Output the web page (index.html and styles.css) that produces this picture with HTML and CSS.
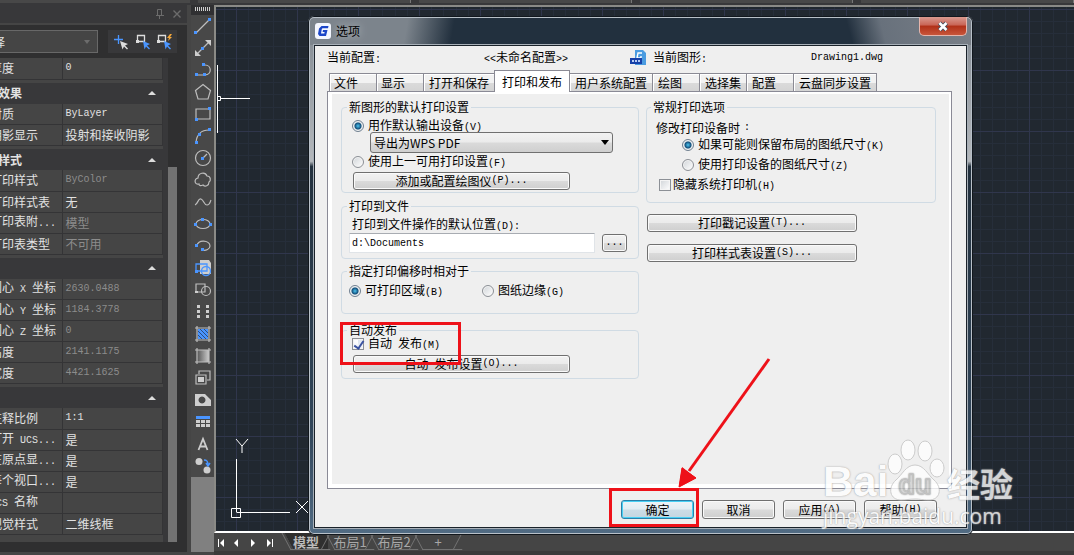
FILE: index.html
```html
<!DOCTYPE html>
<html lang="zh-CN">
<head>
<meta charset="utf-8">
<title>选项</title>
<link rel="stylesheet" href="styles.css">
</head>
<body>
<div class="app">
  <header class="topbar"><i></i><i></i><i></i><i></i></header>

  <aside class="props">
    <div class="props-title">
      <svg width="8" height="10" viewBox="0 0 8 10" fill="none" stroke="#6c6c6c"><path d="M1.5 6.500V.5h4v6M5.500.5v6M0 6.500h8M3.500 7v3"/></svg>
      <svg width="8" height="8" viewBox="0 0 8 8" stroke="#6c6c6c" stroke-width="1.400"><path d="M.5.5l7 7M7.500.5l-7 7"/></svg>
    </div>
    <div class="props-pick">
      <button class="combo"><span>择</span><svg width="6" height="4" viewBox="0 0 6 4"><path d="M0 0h6L3 4z" fill="#6c6c6c"/></svg></button>
      <div class="pickers">
        <svg width="16" height="16" viewBox="0 0 16 16"><path d="M5.500 1v9M1 5.500h9" stroke="#4a95ff" stroke-width="1.300"/><path d="M7 7l8 3-3 1.500 3 3-1 1-3-3-1.500 3z" fill="#ddd"/></svg>
        <svg width="16" height="16" viewBox="0 0 16 16"><path d="M2.500 1.500h7v6h-7z" fill="none" stroke="#ddd" stroke-width="1.300"/><path d="M1 6h3v3H1z" fill="#ddd"/><path d="M8 7l7 3-3 1.500 3 3-1 1-3-3-1.500 3z" fill="#4a95ff"/></svg>
        <svg width="16" height="16" viewBox="0 0 16 16"><path d="M2.500 1.500h7v6h-7z" fill="none" stroke="#ddd" stroke-width="1.300"/><path d="M1 6h3v3H1z" fill="#ddd"/><path d="M14 0l-3 4h2l-1 3 4-4h-2l2-3z" fill="#f5a83a"/><path d="M8 7l7 3-3 1.500 3 3-1 1-3-3-1.500 3z" fill="#4a95ff"/></svg>
      </div>
    </div>
    <div class="props-body">
      <div class="props-list">
        <table class="prop"><tr><th>厚度</th><td class="lat">0</td></tr></table>
        <h3>效果<b></b></h3>
        <table class="prop"><tr><th>材质</th><td class="lat">ByLayer</td></tr><tr><th>阴影显示</th><td>投射和接收阴影</td></tr></table>
        <h3>样式<b></b></h3>
        <table class="prop dim"><tr><th>打印样式</th><td class="lat">ByColor</td></tr><tr><th>打印样式表</th><td class="on">无</td></tr><tr><th>打印表附<span class="lat">...</span></th><td>模型</td></tr><tr><th>打印表类型</th><td>不可用</td></tr></table>
        <h3><b></b></h3>
        <table class="prop dim"><tr><th>圆心<span class="lat"> X </span>坐标</th><td class="lat">2630.0488</td></tr><tr><th>圆心<span class="lat"> Y </span>坐标</th><td class="lat">1184.3778</td></tr><tr><th>圆心<span class="lat"> Z </span>坐标</th><td class="lat">0</td></tr><tr><th>高度</th><td class="lat">2141.1175</td></tr><tr><th>宽度</th><td class="lat">4421.1625</td></tr></table>
        <h3><b></b></h3>
        <table class="prop"><tr><th>注释比例</th><td class="lat">1:1</td></tr><tr><th>打开<span class="lat"> UCS...</span></th><td>是</td></tr><tr><th>在原点显<span class="lat">...</span></th><td>是</td></tr><tr><th>每个视口<span class="lat">...</span></th><td>是</td></tr><tr><th><span class="lat">UCS </span>名称</th><td></td></tr><tr><th>视觉样式</th><td>二维线框</td></tr></table>
      </div>
      <div class="scroll"><i></i></div>
    </div>
  </aside>

  <nav class="tools">
    <div class="grip"><i></i></div>
    <button aria-label="直线"><svg viewBox="0 0 18 18"><path d="M2 16L16 2" class="s"/><path d="M0 14h3v3H0zM14 1h3v3h-3z" class="b"/></svg></button>
    <button aria-label="构造线"><svg viewBox="0 0 18 18"><path d="M2 16L16 2" class="s"/><path d="M11 1h6v6zM1 11v6h6z" class="w"/><path d="M7 8h3v3H7z" class="b"/></svg></button>
    <button aria-label="多段线"><svg viewBox="0 0 18 18"><path d="M2 14h9c7 0 7-10 0-10h-2" class="s"/><path d="M1 12h3v3H1zM9 12h3v3H9zM8 2h3v3H8z" class="b"/></svg></button>
    <button aria-label="多边形"><svg viewBox="0 0 18 18"><path d="M9 1.500l7.500 6L14 16H4L1.500 7.500z" class="s"/></svg></button>
    <button aria-label="矩形"><svg viewBox="0 0 18 18"><path d="M2 4h14v10H2z" class="s"/><path d="M1 13h3v3H1zM14 2h3v3h-3z" class="b"/></svg></button>
    <button aria-label="圆弧"><svg viewBox="0 0 18 18"><path d="M2 15C3 7 7 3 15 3" class="s"/><path d="M1 14h3v3H1zM4 6h3v3H4zM14 1h3v3h-3z" class="b"/></svg></button>
    <button aria-label="圆"><svg viewBox="0 0 18 18"><circle cx="9" cy="9" r="7.500" class="s"/><path d="M9 9l4-4" class="s"/><path d="M7 8h3v3H7z" class="b"/></svg></button>
    <button aria-label="修订云线"><svg viewBox="0 0 18 18"><path d="M5 13c-5 1-5-5-1-6 0-5 7-7 9-2 4 0 4 5 2 6 0 4-4 5-6 3-2 1-4 1-4-1z" class="s"/></svg></button>
    <button aria-label="样条曲线"><svg viewBox="0 0 18 18"><path d="M1 12c3-1 3-7 6-6s3 6 6 6 3-3 4-5" class="s"/></svg></button>
    <button aria-label="椭圆"><svg viewBox="0 0 18 18"><ellipse cx="9" cy="9" rx="7" ry="4.500" class="s"/><path d="M0 8h3v3H0zM15 8h3v3h-3zM7 3h3v3H7z" class="b"/></svg></button>
    <button aria-label="椭圆弧"><svg viewBox="0 0 18 18"><path d="M3 9c0-7 13-6 13 0 0 3-4 5-8 4" class="s"/><path d="M1 7h3v3H1zM7 11h3v3H7z" class="b"/></svg></button>
    <button aria-label="插入块"><svg viewBox="0 0 18 18"><path d="M6 1h9l2 3v11H6z" class="w"/><path d="M2 5h11v7H2z" fill="none" stroke="#4a95ff" stroke-width="1.300"/><circle cx="12" cy="12" r="4.500" fill="none" stroke="#4a95ff" stroke-width="1.300"/><path d="M1 11h3v3H1z" class="b"/></svg></button>
    <button aria-label="创建块"><svg viewBox="0 0 18 18"><path d="M2 3h9v8H2z" class="s"/><circle cx="12" cy="10" r="4.500" class="s"/><path d="M1 10h3v2H1z" class="w"/></svg></button>
    <button aria-label="点"><svg viewBox="0 0 18 18"><path d="M3 2h3v3H3zM12 2h3v3h-3zM3 7h3v3H3zM12 7h3v3h-3zM3 12h3v3H3zM12 12h3v3h-3z" class="w"/></svg></button>
    <button aria-label="图案填充"><svg viewBox="0 0 18 18"><path d="M1 3h16M1 15h16M3 1v16M15 1v16" class="s"/><path d="M4 4h10v10H4z" class="b"/><path d="M4 10l4 4M4 6l8 8M6 4l8 8M10 4l4 4" stroke="#2c4c7c"/></svg></button>
    <button aria-label="渐变色"><svg viewBox="0 0 18 18"><defs><linearGradient id="gr"><stop stop-color="#555"/><stop offset="1" stop-color="#ccc"/></linearGradient></defs><path d="M3 3h12v12H3z" fill="url(#gr)"/><path d="M1 3h16M1 15h16M3 1v16M15 1v16" class="s"/></svg></button>
    <button aria-label="面域"><svg viewBox="0 0 18 18"><path d="M5 5V2h11v9h-3" class="s"/><path d="M2 6h10v9H2z" class="s"/><path d="M4 8h6v5H4z" class="w"/></svg></button>
    <button aria-label="区域覆盖"><svg viewBox="0 0 18 18"><path fill-rule="evenodd" d="M1 3h10l6 6v6H1zM8 5.500a3.500 3.500 0 1 0 .01 0z" class="w"/></svg></button>
    <button aria-label="表格"><svg viewBox="0 0 18 18"><path d="M2 3h14v3H2z" class="b"/><path d="M2 7h4v3H2zM7 7h4v3H7zM12 7h4v3h-4zM2 11h4v3H2zM7 11h4v3H7zM12 11h4v3h-4z" class="w"/></svg></button>
    <button aria-label="多行文字"><svg viewBox="0 0 18 18"><path d="M4.500 15L9 4l4.500 11M6 11.500h6" fill="none" stroke="#ccc" stroke-width="1.800"/></svg></button>
    <button aria-label="添加选定对象"><svg viewBox="0 0 18 18"><circle cx="5" cy="4.500" r="3.500" class="w"/><circle cx="13" cy="13" r="3.500" class="w"/><path d="M10 3c3 0 4 1 4 5M12 6l2 3 2-3" fill="none" stroke="#4a95ff" stroke-width="1.500"/></svg></button>
    <div class="tools-rest"></div>
  </nav>

  <main class="canvas">
    <svg class="grid" width="100%" height="100%">
      <defs><pattern id="g" x="20" y="63" width="61" height="61" patternUnits="userSpaceOnUse">
        <path d="M12.500 0v61M24.500 0v61M37.500 0v61M49.500 0v61M0 12.500h61M0 24.500h61M0 37.500h61M0 49.500h61" stroke="#262e3a"/>
        <path d="M.5 0v61M0 .5h61" stroke="#30364c"/></pattern></defs>
      <rect width="100%" height="100%" fill="#212830"/><rect width="100%" height="100%" fill="url(#g)"/>
      <g fill="none" stroke="#fff"><path d="M1.500 58v68M5 91.500h29"/><path d="M1.500 89.500h3v4h-3z"/></g>
    </svg>
    <svg class="ucs" width="84" height="86" viewBox="0 0 84 86" fill="none" stroke="#fff"><path d="M20.500 24v53M20.500 77.500H74M15.500 73.500h9v9h-9zM20 4l6 7 6-7M26 11v7M80 66l12 12M92 66L80 78"/></svg>
  </main>

  <footer class="layouts">
    <svg width="58" height="8" viewBox="0 0 58 8" fill="#fff"><path d="M2 0h1v8H2zM8 0v8L4 4zM22 0v8l-4-4zM35 0v8l4-4zM51 0v8l4-4zM56 0h1v8h-1z"/></svg>
    <div class="layout-tabs"><button class="cur">模型</button><button>布局1</button><button>布局2</button><button>+</button></div>
  </footer>
</div>

<section class="dialog" role="dialog" aria-label="选项">
  <div class="titlebar">
    <svg width="16" height="16" viewBox="0 0 16 16"><rect width="16" height="16" rx="3" fill="#f4f7ff"/><path d="M13.500 3H6.500L4 5.500 3 11l1.500 2h6.500l1.500-6H8l-.4 2h2l-.3 1.500H6l.8-4.500.7-.8H13z" fill="#1c46c8"/></svg>
    <span>选项</span>
    <button class="close" aria-label="关闭"><svg width="12" height="11" viewBox="0 0 12 11"><path d="M2.500 2l7 7M9.500 2l-7 7" stroke="#444c5c" stroke-width="4.500"/><path d="M2.500 2l7 7M9.500 2l-7 7" stroke="#fff" stroke-width="2.600"/></svg></button>
  </div>
  <div class="client">
    <div class="heading">
      <span class="h1">当前配置<span class="lat">:</span></span>
      <span class="h2"><span class="lat">&lt;&lt;</span>未命名配置<span class="lat">&gt;&gt;</span></span>
      <svg width="16" height="16" viewBox="0 0 16 16"><path d="M5 0h8l3 3v12H5z" fill="#4a9be0"/><path d="M12 3H8L7 8h4V6" fill="none" stroke="#fff" stroke-width="1.400"/><path d="M0 8h12v6H0z" fill="#1740a8"/><path d="M2 11h8" stroke="#b8ccf4" stroke-width="2" stroke-dasharray="2 1"/></svg>
      <span class="h3">当前图形<span class="lat">:</span></span>
      <span class="lat">Drawing1.dwg</span>
    </div>
    <div class="tabs" role="tablist">
      <button role="tab">文件</button><button role="tab">显示</button><button role="tab">打开和保存</button><button role="tab" aria-selected="true">打印和发布</button><button role="tab">用户系统配置</button><button role="tab">绘图</button><button role="tab">选择集</button><button role="tab">配置</button><button role="tab">云盘同步设置</button>
    </div>
    <div class="page"><div class="cols">
      <div class="col">
        <fieldset class="f1"><legend>新图形的默认打印设置</legend>
          <label class="opt"><input type="radio" name="dev" checked><span>用作默认输出设备<span class="lat">(V)</span></span></label>
          <div class="drop"><select aria-label="输出设备"><option>导出为WPS PDF</option></select><svg width="8" height="5" viewBox="0 0 8 5"><path d="M0 0h8L4 5z"/></svg></div>
          <label class="opt gap3"><input type="radio" name="dev"><span>使用上一可用打印设置<span class="lat">(F)</span></span></label>
          <button class="btn wide">添加或配置绘图仪<span class="lat">(P)...</span></button>
        </fieldset>
        <fieldset class="f2"><legend>打印到文件</legend>
          <label class="opt" for="path"><span>打印到文件操作的默认位置<span class="lat">(D):</span></span></label>
          <div class="path"><input id="path" class="lat" type="text" value="d:\Documents"><button class="btn lat">...</button></div>
        </fieldset>
        <fieldset class="f3"><legend>指定打印偏移时相对于</legend>
          <div class="pair"><label class="opt"><input type="radio" name="off" checked><span>可打印区域<span class="lat">(B)</span></span></label><label class="opt"><input type="radio" name="off"><span>图纸边缘<span class="lat">(G)</span></span></label></div>
        </fieldset>
        <fieldset class="f4"><legend>自动发布</legend>
          <label class="opt"><input type="checkbox" checked><span>自动<span class="lat"> </span>发布<span class="lat">(M)</span></span></label>
          <button class="btn wide">自动<span class="lat">&nbsp;</span>发布设置<span class="lat">(O)...</span></button>
          <div class="mark mark-auto"></div>
        </fieldset>
      </div>
      <div class="col">
        <fieldset class="f5"><legend>常规打印选项</legend>
          <div class="opt">修改打印设备时<span class="lat">:</span></div>
          <label class="opt sub"><input type="radio" name="paper" checked><span>如果可能则保留布局的图纸尺寸<span class="lat">(K)</span></span></label>
          <label class="opt sub"><input type="radio" name="paper"><span>使用打印设备的图纸尺寸<span class="lat">(Z)</span></span></label>
          <label class="opt hide"><input type="checkbox"><span>隐藏系统打印机<span class="lat">(H)</span></span></label>
        </fieldset>
        <button class="btn side">打印戳记设置<span class="lat">(T)...</span></button>
        <button class="btn side">打印样式表设置<span class="lat">(S)...</span></button>
      </div>
    </div></div>
    <div class="actions">
      <div class="okwrap"><button class="btn ok">确定</button><div class="mark mark-ok"></div>
        <svg class="arrow" width="96" height="132" viewBox="0 0 96 132"><path d="M92 2L12 114" stroke="#ee1119" stroke-width="3"/><path d="M2 130l3-20 14 11z" fill="#ee1119"/><path d="M2 130l3-19 14 10z" stroke="#ee1119" fill="#ee1119"/></svg>
      </div>
      <button class="btn">取消</button><button class="btn">应用<span class="lat">(A)</span></button><button class="btn">帮助<span class="lat">(H)</span></button>
    </div>
  </div>
</section>

<div class="watermark">
  <div class="brand"><span class="bai">Bai</span>
    <svg width="58" height="62" viewBox="0 0 58 62" fill="#fff" stroke="#c4c4c4"><ellipse cx="8" cy="24" rx="7" ry="10"/><ellipse cx="21" cy="10" rx="7" ry="10"/><ellipse cx="38" cy="11" rx="7" ry="10"/><ellipse cx="50" cy="28" rx="7" ry="9"/><path d="M28 25c9 0 13 10 19 15 9 8 6 20-5 20-7 0-8-1-14-1s-8 1-14 1C3 60 0 48 9 40c6-5 10-15 19-15z"/><text x="28" y="54" text-anchor="middle" class="du">du</text></svg>
    <span class="jy">经验</span></div>
  <div class="url">jingyan.baidu.com</div>
</div>
</body>
</html>
```
FILE: styles.css
```css
* { box-sizing: border-box; }
body {
  margin: 0;
  height: 100vh;
  overflow: hidden;
  position: relative;
  background: #454545;
  font: 12px/14px "Noto Sans CJK SC", sans-serif;
  color: #000;
}
button, input, select { font: inherit; color: inherit; margin: 0; padding: 0; }
button { border: 0; background: none; white-space: nowrap; }
.lat { font-family: "Liberation Mono", monospace; font-size: 10px; white-space: pre; }

/* application shell */
.app {
  height: 100vh;
  display: grid;
  grid-template: 5px 1fr 22px / 191px 23px 1fr;
}
.topbar { grid-column: 1 / -1; display: flex; gap: 8px; padding-left: 98px; background: #38383a; }
.topbar::before { content: ""; width: 190px; height: 3px; margin-left: -98px; background: #484848; }
.topbar i { flex: 1; height: 3px; background: #484848; border-right: 1px solid #777; }
.props { grid-row: 2 / 4; display: flex; flex-direction: column; overflow: hidden; background: #2f2f30; border-right: 4px solid #454545; border-bottom: 3px solid #454545; color: #e2e2e2; }
.props-title { height: 20px; background: #38383a; border-bottom: 2px solid #454545; display: flex; justify-content: flex-end; align-items: center; gap: 9px; padding-right: 6px; }
.props-pick { display: flex; justify-content: space-between; margin: 5px 10px 5px 0; height: 23px; }
.combo { width: 98px; border: 1px solid #686868; border-left: 0; background: #454545; display: flex; justify-content: space-between; align-items: center; padding-right: 7px; overflow: hidden; }
.combo span { margin-left: -7px; }
.pickers { width: 69px; background: #38383a; display: flex; align-items: center; justify-content: space-evenly; }
.props-body { flex: 1; display: flex; margin: 0 10px 10px 0; background: #38383a; }
.props-list { width: 163px; background: #454545; overflow: hidden; }
.prop { width: 163px; border-collapse: collapse; table-layout: fixed; margin-bottom: 3px; border-bottom: 0; }
.prop tr { height: 21px; }
.prop th, .prop td { height: 21px; padding: 0; border: 0 solid #343436; border-bottom-width: 1px; font-weight: 400; text-align: left; white-space: pre; overflow: hidden; }
.prop th { width: 62px; text-indent: -10px; }
.prop td { border-left-width: 1px; border-right-width: 1px; padding-left: 3px; }
.prop td.lat, .prop td { color: #e2e2e2; }
.dim td, .dim td.lat { color: #8c8c8c; }
.dim td.on { color: #e2e2e2; }
.props h3 { margin: 0; height: 21px; background: #38383a; font-size: 12px; line-height: 20px; font-weight: 700; text-indent: -2px; display: flex; justify-content: space-between; align-items: center; padding-right: 7px; }
.props h3 b { margin-left: auto; border: 4px solid transparent; border-top: 0; border-bottom-color: #ddd; }
.scroll { margin-left: auto; width: 9px; background: #2f2f30; padding-top: 109px; display: flex; }
.scroll i { width: 9px; background: #727272; }

.tools { grid-row: 2 / 4; display: flex; flex-direction: column; background: #484848; border-bottom: 3px solid #454545; }
.grip { height: 10px; background: #303032; padding: 2px 4px; }
.grip i { display: block; height: 4px; background: repeating-linear-gradient(90deg, #ccc 0 1px, transparent 1px 2px); }
.tools button { height: 22px; display: flex; align-items: center; justify-content: center; }
.tools svg { width: 18px; height: 18px; }
.tools .s { fill: none; stroke: #bdbdbd; stroke-width: 1.2; }
.tools .w { fill: #cecece; }
.tools .b { fill: #4a95ff; }
.tools-rest { flex: 1; background: #808080; }

.canvas { position: relative; overflow: hidden; border: 2px solid #8a8a86; border-width: 2px 0 2px 2px; border-bottom-color: #fff; }
.grid { display: block; }
.ucs { position: absolute; left: 0; bottom: 10px; overflow: visible; }
.layouts { grid-column: 3; display: flex; align-items: flex-start; background: #454545; border-bottom: 4px solid #3b3b3b; }
.layouts > svg { margin: 6px 0 0 2px; }
.layout-tabs { display: flex; margin-left: 10px; }
.layout-tabs button { position: relative; height: 17px; width: 44px; color: #a8a8a8; font-size: 13px; line-height: 16px; }
.layout-tabs button::before { content: ""; position: absolute; inset: 0 2px; border: 1px solid #737373; border-top: 0; border-right-width: 0; transform: skewX(28deg); }
.layout-tabs button::after { content: ""; position: absolute; inset: 0 2px; border-right: 1px solid #737373; transform: skewX(-28deg); }
.layout-tabs .cur { color: #bbb; font-weight: 700; }
.layout-tabs .cur { background: linear-gradient(62deg, transparent 18%, #2f2f2f 19%); }

/* options dialog */
.dialog {
  position: absolute;
  inset: 16px 101px 20px 308px;
  display: flex;
  flex-direction: column;
  padding: 0 6px 7px;
  border-radius: 6px;
  border: 0;
  background:
    linear-gradient(100deg, #7c848c 0, #7c848c 15%, transparent 22%) top / 100% 29px no-repeat,
    linear-gradient(75deg, transparent 81%, #68717c 86%, #7a8088 100%) top / 100% 29px no-repeat,
    linear-gradient(#22303e, #22303e) top / 100% 29px no-repeat,
    linear-gradient(#808890 0, #b4b8bc 28%, #24323f 29%, #31465a 80%, #526c84 100%);
  box-shadow: inset 0 0 0 1px #11171d, inset 0 0 0 2px #b8c0c8;
}
.titlebar { flex: none; height: 29px; display: flex; align-items: center; gap: 5px; padding-left: 1px; }
.titlebar span { text-shadow: 0 0 8px #c8ccd0; font-size: 12px; }
.close { align-self: flex-start; margin: 1px 0 0 auto; width: 48px; height: 19px; display: flex; align-items: center; justify-content: center; border: 1px solid #e5b5ac; border-top: 0; border-radius: 0 0 5px 5px; background: linear-gradient(#d99a90, #c96455 45%, #b03018 50%, #c8553a); }
.client { flex: 1; display: flex; flex-direction: column; min-height: 0; padding: 0 14px 0 12px; background: #efefef; border: 1px solid #1a222a; box-shadow: 0 0 0 1px #a8b0b8; }
.heading { height: 24px; display: flex; align-items: center; }
.h1 { width: 157px; }
.h2 { width: 146px; }
.h3 { width: 158px; margin-left: 7px; }
.tabs { height: 21px; display: flex; align-items: flex-end; padding-left: 2px; }
.tabs button { height: 18px; min-width: 48px; padding: 0 4px; text-align: left; border: 1px solid #8a8a94; border-width: 1px 1px 0; box-shadow: inset 1px 1px #fff; margin-right: -1px; background: linear-gradient(#f2f2f2 50%, #dadada 55%, #d4d4d4); line-height: 17px; }
.tabs button:nth-child(n+3) { padding: 0 5px; }
.tabs [aria-selected] { height: 22px; margin-bottom: -1px; padding: 0 7px; background: #fff; line-height: 20px; position: relative; }
.tabs button[aria-selected] { padding: 0 7px; }
.page { flex: 1; display: flex; border: 1px solid #8a8a96; background: #fff; padding: 2px 2px 4px 4px; }
.cols { flex: 1; display: grid; grid-template-columns: 298fr 290fr; gap: 7px; padding: 6px 13px 0 9px; background: #efefef; align-content: start; }
.col { min-width: 0; }
fieldset { margin: 0 0 6px; min-width: 0; border: 1px solid #d0dbe4; border-radius: 4px; padding: 6px 5px 2px; position: relative; box-shadow: none; }
legend { padding: 0 2px; height: 14px; line-height: 14px; }
.opt { display: flex; align-items: center; gap: 4px; height: 12px; line-height: 12px; margin-left: 5px; white-space: nowrap; }
.gap3 { margin-top: 3px; }
.f2 { padding-bottom: 5px; margin-bottom: 5px; }
.f3 { padding: 7px 2px 16px; margin-bottom: 9px; }
.f3 legend { margin-left: 3px; }
.f4 { padding-top: 1px; padding-bottom: 5px; }
.f4 .wide { margin-top: 5px; }
.f5 { padding: 8px 4px 11px; margin-bottom: 11px; }
.f5 .sub { margin: 5px 0 0 31px; }
.f5 .sub + .sub, .f5 .hide { margin-top: 8px; }
.f5 .hide { margin-left: 8px; gap: 2px; }
.pair { display: flex; }
.pair .opt { width: 133px; }
.pair .opt + .opt { margin-left: 0; }
input[type="radio"], input[type="checkbox"] { appearance: none; width: 12px; height: 12px; flex: none; border: 1px solid #8c9096; background: linear-gradient(135deg, #d0d4d8, #fff); box-shadow: inset 0 0 0 1px #f4f4f4; }
input[type="radio"] { border-radius: 50%; }
input[type="radio"]:checked { background: radial-gradient(circle, #4cc4f0 0, #14507c 3px, #c8d4dc 4px, #fff); border-color: #708090; }
input[type="checkbox"]:checked { background: conic-gradient(from 0deg, #dfe6f0, #fff); position: relative; }
input[type="checkbox"]:checked::after { content: ""; position: absolute; left: 3px; top: 0; width: 4px; height: 8px; border: solid #3a52a0; border-width: 0 2px 2px 0; transform: rotate(35deg); }
.btn { display: flex; align-items: center; justify-content: center; height: 18px; border: 1px solid #707070; border-radius: 3px; background: linear-gradient(#f2f2f2, #ebebeb 48%, #dadada 52%, #cfcfcf); box-shadow: inset 0 0 0 1px #fafafa; line-height: 16px; }
.wide { width: 217px; margin: 4px 0 0 6px; }
.side { width: 210px; margin: 0 0 12px 1px; }
.drop { position: relative; width: 243px; height: 21px; margin-left: 23px; }
.drop select { appearance: none; width: 100%; height: 21px; padding-left: 3px; border: 1px solid #707070; border-radius: 3px; background: linear-gradient(#f2f2f2, #ebebeb 48%, #dadada 52%, #cfcfcf); line-height: 16px; }
.drop svg { position: absolute; right: 4px; top: 8px; }
.path { display: flex; align-items: center; gap: 7px; margin: 2px 0 0 2px; }
.path input { width: 246px; height: 20px; border: 1px solid #e0e4e8; border-top-color: #a8acb2; background: #fff; padding-left: 2px; }
.path .btn { width: 25px; }
.actions { display: flex; gap: 8px; justify-content: flex-end; height: 38px; padding: 11px 15px 0 0; }
.actions .btn { width: 73px; height: 19px; }
.okwrap { position: relative; }
.actions .ok { border-color: #2c7fa8; box-shadow: inset 0 0 0 1px #48d0f4; background: linear-gradient(#eef4f8, #e2edf3 48%, #ccdde6 52%, #c4d6e0); }

/* callouts */
.mark { position: absolute; border: 3px solid #ee1119; pointer-events: none; }
.mark-auto { left: -2px; top: -15px; width: 121px; height: 43px; }
.mark-ok { left: -12px; top: -12px; width: 90px; height: 39px; }
.arrow { position: absolute; left: 56px; bottom: 38px; pointer-events: none; }

.watermark { position: absolute; right: 58px; bottom: 24px; width: 193px; color: #fff; opacity: .8; pointer-events: none; font-family: "Open Sans", sans-serif; text-shadow: 0 0 1px #999, 0 0 2px #aaa; }
.brand { display: flex; align-items: flex-end; height: 62px; }
.bai { width: 64px; font: 700 42px/40px "Liberation Sans", sans-serif; }
.jy { margin-left: 2px; font: 700 33px/38px "Noto Sans CJK SC", sans-serif; }
.brand svg { flex: none; overflow: visible; }
.du { font: 700 27px "Liberation Sans", sans-serif; fill: #ddd; stroke: #bbb; }
.url { font-size: 21px; line-height: 29px; }
```
